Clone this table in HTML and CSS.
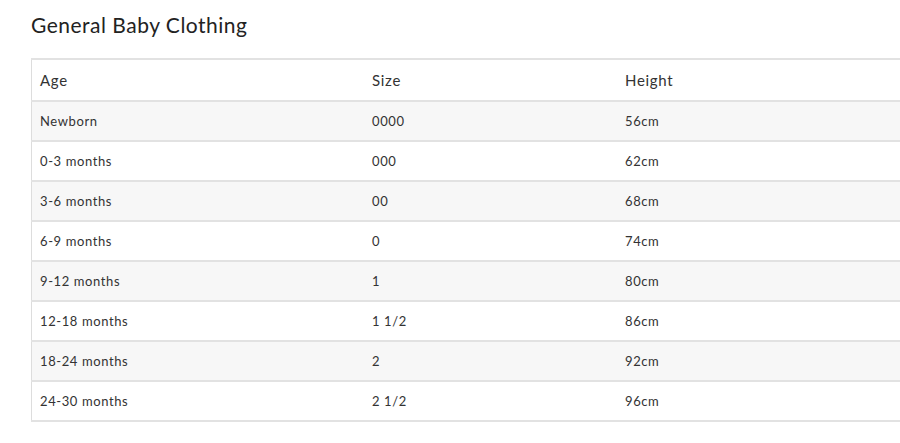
FILE: index.html
```html
<!DOCTYPE html>
<html lang="en">
<head>
<meta charset="utf-8">
<title>General Baby Clothing</title>
<link rel="stylesheet" href="styles.css">
</head>
<body>
<main class="page">
  <h2 class="title">General Baby Clothing</h2>
  <div class="table-wrap">
    <table class="size-table">
      <thead>
        <tr><th class="col-age">Age</th><th class="col-size">Size</th><th>Height</th></tr>
      </thead>
      <tbody>
        <tr><td>Newborn</td><td>0000</td><td>56cm</td></tr>
        <tr><td>0-3 months</td><td>000</td><td>62cm</td></tr>
        <tr><td>3-6 months</td><td>00</td><td>68cm</td></tr>
        <tr><td>6-9 months</td><td>0</td><td>74cm</td></tr>
        <tr><td>9-12 months</td><td>1</td><td>80cm</td></tr>
        <tr><td>12-18 months</td><td>1 1/2</td><td>86cm</td></tr>
        <tr><td>18-24 months</td><td>2</td><td>92cm</td></tr>
        <tr><td>24-30 months</td><td>2 1/2</td><td>96cm</td></tr>
      </tbody>
    </table>
  </div>
</main>
</body>
</html>
```
FILE: styles.css
```css
html, body {
  margin: 0;
  padding: 0;
  background: #fff;
  overflow: hidden;
}
body {
  font-family: "Lato", "Liberation Sans", sans-serif;
  color: #333;
}
.page {
  padding: 12px 0 0 31px;
}
.title {
  margin: 0 0 20px 0;
  font-size: 21px;
  font-weight: 400;
  line-height: 26px;
  letter-spacing: 0.5px;
  color: #222;
}
.table-wrap {
  width: 869px;
}
.size-table {
  width: 100%;
  border-collapse: collapse;
  border-left: 1px solid #ddd;
  border-top: 2px solid #e2e2e2;
  border-bottom: 2px solid #e2e2e2;
}
.size-table th,
.size-table td {
  text-align: left;
  padding: 0 0 0 8px;
  border-bottom: 2px solid #e2e2e2;
}
.size-table th {
  height: 40px;
  font-size: 15px;
  font-weight: 400;
  letter-spacing: 0.7px;
  color: #333;
}
.size-table td {
  height: 38px;
  font-size: 13px;
  letter-spacing: 0.6px;
  color: #333;
}
.col-age { width: 324px; }
.col-size { width: 245px; }
.size-table tbody tr:nth-child(odd) td {
  background: #f7f7f7;
}
```
